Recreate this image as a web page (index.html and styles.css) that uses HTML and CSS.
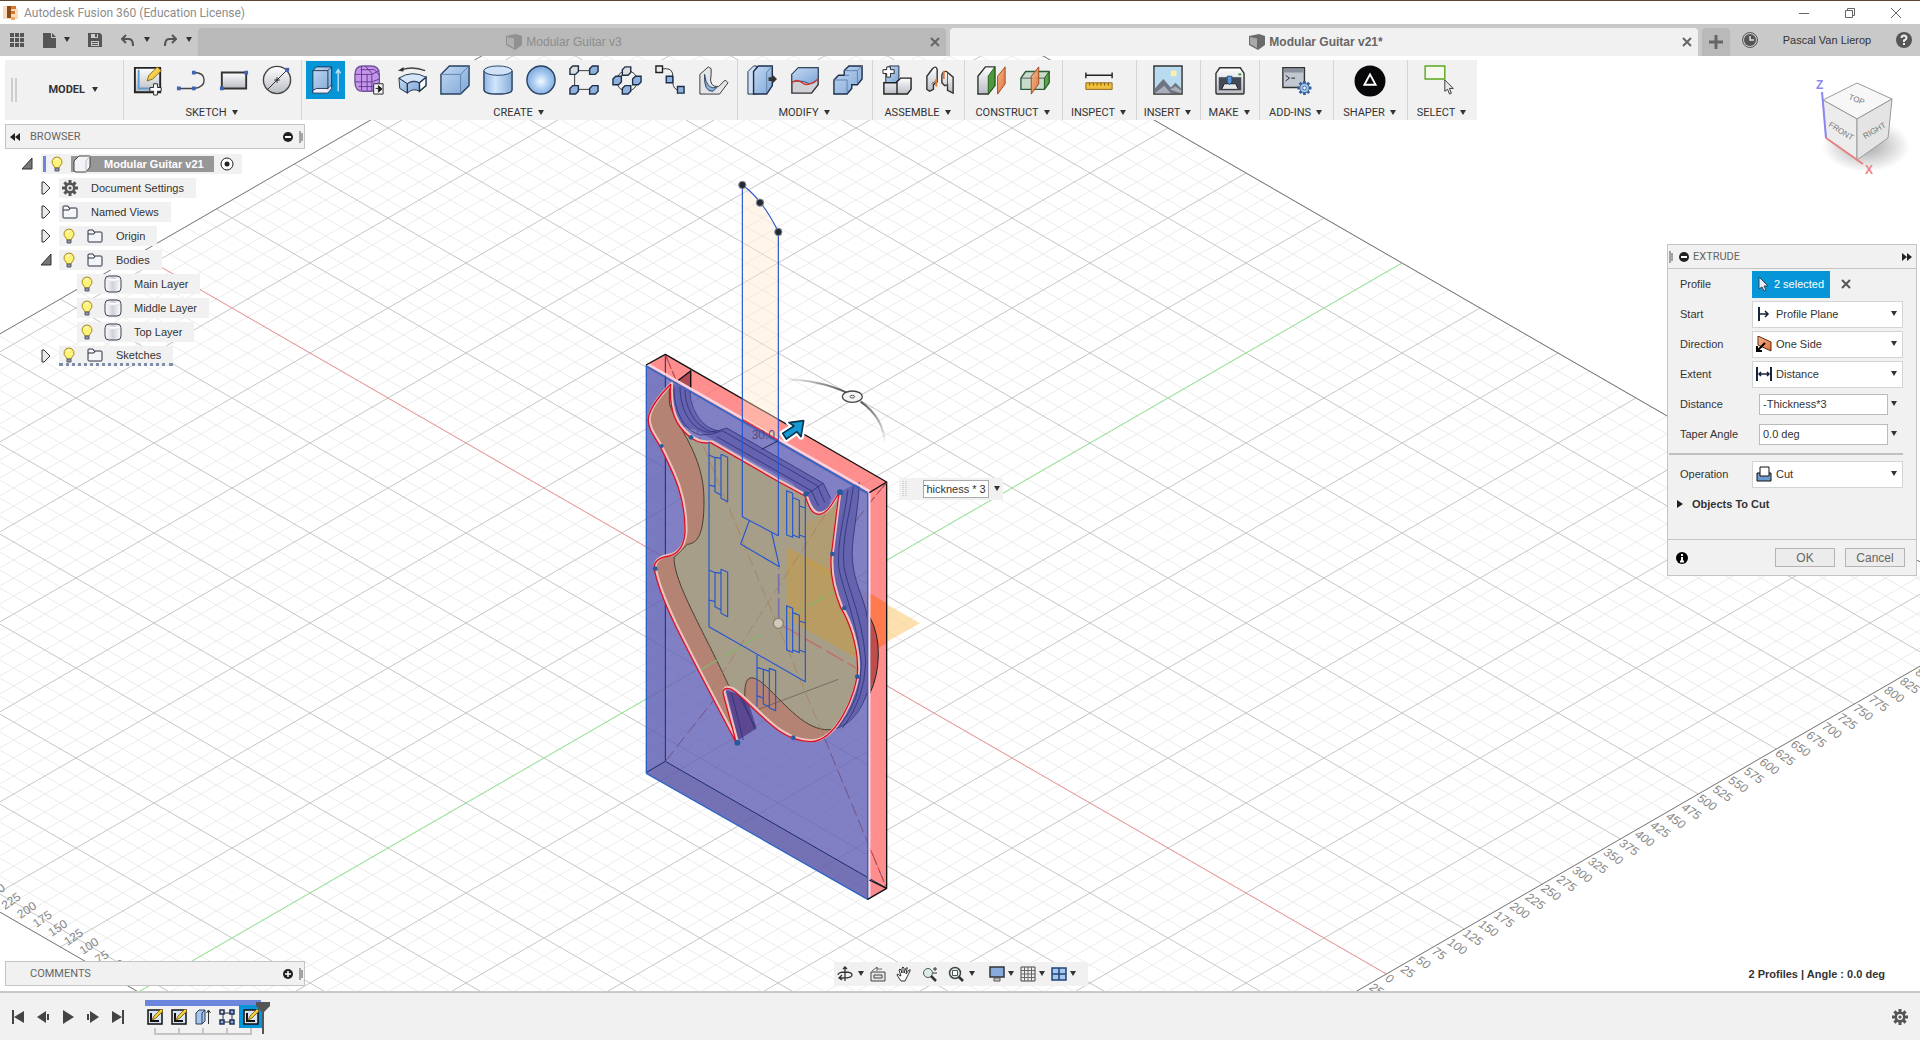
FILE: index.html
```html
<!DOCTYPE html>
<html lang="en">
<head>
<meta charset="utf-8">
<title>Autodesk Fusion 360 (Education License)</title>
<link rel="stylesheet" href="styles.css">
</head>
<body>
<svg class="defs" width="0" height="0" aria-hidden="true">
  <defs>
    <linearGradient id="gBlue" x1="0" y1="0" x2="1" y2="1"><stop offset="0" stop-color="#c3daf4"/><stop offset="1" stop-color="#7fa6d6"/></linearGradient>
    <linearGradient id="gCyl"><stop offset="0" stop-color="#8fb6e4"/><stop offset=".4" stop-color="#d3e6fb"/><stop offset="1" stop-color="#86add9"/></linearGradient>
    <linearGradient id="gGrey" x1="0" y1="0" x2="0" y2="1"><stop offset="0" stop-color="#ffffff"/><stop offset="1" stop-color="#b9bcc4"/></linearGradient>
    <linearGradient id="gBox" x1="0" y1="0" x2="1" y2="0"><stop offset="0" stop-color="#ffffff"/><stop offset=".5" stop-color="#cfd2d8"/><stop offset="1" stop-color="#ffffff"/></linearGradient>
    <linearGradient id="gOrange" x1="0" y1="0" x2="1" y2="1"><stop offset="0" stop-color="#f7b78d"/><stop offset="1" stop-color="#e0713a"/></linearGradient>
    <linearGradient id="gArcL" gradientUnits="userSpaceOnUse" x1="490" y1="627" x2="680" y2="668"><stop offset="0" stop-color="#555" stop-opacity="0"/><stop offset="1" stop-color="#555"/></linearGradient>
    <linearGradient id="gArcR" gradientUnits="userSpaceOnUse" x1="722" y1="695" x2="794" y2="820"><stop offset="0" stop-color="#555"/><stop offset="1" stop-color="#555" stop-opacity="0"/></linearGradient>
    <radialGradient id="gBall" cx=".5" cy=".55" r=".55"><stop offset="0" stop-color="#f2f9ff"/><stop offset=".55" stop-color="#a5c9f0"/><stop offset="1" stop-color="#7ba7dc"/></radialGradient>
    <radialGradient id="gShadow"><stop offset="0" stop-color="#000" stop-opacity=".35"/><stop offset="1" stop-color="#000" stop-opacity="0"/></radialGradient>
    <symbol id="down" viewBox="0 0 8 6"><path d="M1 0h6L4 5z" fill="#333"/></symbol>
    <symbol id="bulb" viewBox="0 0 14 18"><path d="M7 2a5 5 0 0 0-3 9l1 2h4l1-2a5 5 0 0 0-3-9z" fill="#fdf27a" stroke="#a98a1e"/><path d="M5.500 5.500a2 2 0 0 1 2-1.500" stroke="#fff" stroke-width="1.500" fill="none"/><path d="M5 13h4v3H5z" fill="#8f97a5" stroke="#555c68"/></symbol>
    <symbol id="folder" viewBox="0 0 16 14"><path d="M1 3V2q0-1 1-1h4l1 2h7q1 0 1 1v8q0 1-1 1H2q-1 0-1-1z" fill="#f4f5f8" stroke="#2b3040"/><path d="M1 5h6l1-2" fill="none" stroke="#2b3040"/></symbol>
    <symbol id="body" viewBox="0 0 18 18"><path d="M1 5q0-4 4-4h8q4 0 4 4v8q0 4-4 4H5q-4 0-4-4z" fill="url(#gBox)" stroke="#3c4252"/><path d="M2 4q0 2 3 2h8q3 0 3-2" stroke="#dfe2e8" fill="#fff"/></symbol>
    <symbol id="shut" viewBox="0 0 12 14"><path d="M2 1h2l6 6-6 6H2z" fill="#e8e8e8" stroke="#333"/></symbol>
    <symbol id="open" viewBox="0 0 12 14"><path d="M11 1v11H1z" fill="#777" stroke="#333"/></symbol>
    <symbol id="gear" viewBox="0 0 16 16"><g stroke="#555" stroke-width="3"><path d="M8 0v16M0 8h16M2.400 2.400l11.200 11.200M13.600 2.400L2.400 13.600"/></g><circle cx="8" cy="8" r="5.500" fill="#555"/><circle cx="8" cy="8" r="3" fill="#f1f1f1"/><circle cx="8" cy="8" r="1.600" fill="#555"/></symbol>
    <symbol id="sketch" viewBox="0 0 16 16"><path d="M1 1h14v14H1z" fill="#d7e4f5" stroke="#111" stroke-width="1.500"/><path d="M4 4v8h8" fill="none" stroke="#111" stroke-width="2"/><path d="M5 11l2-4 7-7 2 2-7 7z" fill="#f4cf3f" stroke="#8a6a12"/></symbol>
    <symbol id="cube" viewBox="0 0 16 16"><path d="M0 2l10-2 6 2v9l-7 5-9-5z" fill="#6b6b6b"/><path d="M1 3l7 1.500V14L1 10z" fill="#a9a9a9"/></symbol>
    <symbol id="grip" viewBox="0 0 4 12"><path d="M1 0v12M3 2v8" stroke="#555"/></symbol>
  </defs>
</svg>

<header class="titlebar">
  <svg width="16" height="16" viewBox="0 0 16 16"><path d="M0 1h12l3 4v9H0z" fill="#f8dcbc"/><path d="M4 1h9v3H8v2h4v3H8v4H4z" fill="#d9762a"/><path d="M4 1h4v12H4z" fill="#8c4a1a"/><path d="M8 12h4v3H8z" fill="#f0a867"/></svg>
  <h1 class="title">Autodesk Fusion 360 (Education License)</h1>
  <div class="winctl">
    <button aria-label="Minimize"><svg width="12" height="12"><path d="M1 6.500h10" stroke="#666"/></svg></button>
    <button aria-label="Restore"><svg width="12" height="12"><path d="M1.500 3.500h7v7h-7zM3.500 3V1.500h7v7H9" fill="none" stroke="#666"/></svg></button>
    <button aria-label="Close"><svg width="12" height="12"><path d="M1 1l10 10M11 1L1 11" stroke="#666"/></svg></button>
  </div>
</header>

<nav class="tabbar">
  <div class="quick">
    <button class="q1" aria-label="Data panel"><svg width="14" height="14"><path d="M0 0h4v4H0zM5 0h4v4H5zM10 0h4v4h-4zM0 5h4v4H0zM5 5h4v4H5zM10 5h4v4h-4zM0 10h4v4H0zM5 10h4v4H5zM10 10h4v4h-4z" fill="#555"/></svg></button>
    <button class="q2" aria-label="File"><svg width="13" height="15"><path d="M0 0h8v5h5v10H0zM9 0l4 4H9z" fill="#555"/></svg><svg width="8" height="6"><use href="#down"/></svg></button>
    <button class="q3" aria-label="Save"><svg width="14" height="14"><path d="M0 0h12l2 2v12H0z" fill="#555"/><path d="M3 1h7v4H3zM3 8h8v5H3z" fill="#ccc"/><path d="M7 1h2v3H7zM4 9h6v1H4zM4 11h6v1H4z" fill="#555"/></svg></button>
    <button class="q4" aria-label="Undo"><svg width="14" height="13"><path d="M5 1L1 5l4 4M1 5h7q4 0 4 7" fill="none" stroke="#555" stroke-width="2"/></svg><svg width="8" height="6"><use href="#down"/></svg></button>
    <button class="q4" aria-label="Redo"><svg width="14" height="13"><path d="M9 1l4 4-4 4M13 5H6q-4 0-4 7" fill="none" stroke="#555" stroke-width="2"/></svg><svg width="8" height="6"><use href="#down"/></svg></button>
  </div>
  <div class="tab dim"><span class="tabname"><svg width="16" height="16"><use href="#cube"/></svg>Modular Guitar v3</span><button aria-label="Close tab"><svg width="10" height="10"><path d="M1 1l8 8M9 1L1 9" stroke="#666" stroke-width="2"/></svg></button></div>
  <div class="tab active"><span class="tabname"><svg width="16" height="16"><use href="#cube"/></svg>Modular Guitar v21*</span><button aria-label="Close tab"><svg width="10" height="10"><path d="M1 1l8 8M9 1L1 9" stroke="#666" stroke-width="2"/></svg></button></div>
  <button class="newtab" aria-label="New tab"><svg width="14" height="14"><path d="M7 0v14M0 7h14" stroke="#666" stroke-width="3"/></svg></button>
  <div class="account">
    <button aria-label="Job status"><svg width="16" height="16"><circle cx="8" cy="8" r="7.500" fill="none" stroke="#555"/><circle cx="8" cy="8" r="6" fill="#555"/><path d="M8 4v4h4" stroke="#ddd" fill="none" stroke-width="1.500"/></svg></button>
    <button class="user">Pascal Van Lierop</button>
    <button aria-label="Help"><svg width="16" height="16"><circle cx="8" cy="8" r="8" fill="#555"/><path d="M5.500 6q0-2.500 2.500-2.500T10.500 6Q10.500 7.500 8 8.500V10M8 11v2" stroke="#eee" stroke-width="2" fill="none"/></svg></button>
  </div>
</nav>

<main class="stage">
  <svg class="canvas" viewBox="0 56 1920 935" preserveAspectRatio="xMidYMid slice">
    <g id="grid"></g>
    <g id="rulers" class="rulers"></g>
    <g transform="translate(620 170) scale(.33333)" stroke-linejoin="round">
      <path d="M690 1240L900 1360 690 1478z" fill="#fbd48c" fill-opacity=".7"/>
      <!-- stock: front, top and right faces -->
      <path d="M78 585l58-32 664 383v1219l-57 33V968z" fill="#ff7070" fill-opacity=".78"/>
      <path d="M78 585l670 383-5 1220L78 1808z" fill="#6260b5" fill-opacity=".8"/>
      <path d="M78 1808l58-34 664 381-57 33z" fill="#625a9e" fill-opacity=".4"/>
      <path d="M78 585l58 32v1157l-58 34z" fill="#5a55ad" fill-opacity=".15"/>
      <path d="M748 968l52-32v1219l-57 33z" fill="#ff8f8f" fill-opacity=".85"/>
      <path d="M750 1270l50 30v120l-50 28z" fill="#ff7a4e"/>
      <path d="M750 1342q26 50 25 113t-25 115z" fill="#c04c4c" stroke="#222" stroke-width="3"/>
      <path d="M136 553v1221l664 381M136 1774l-58 34M212 602v55l-36-25z" fill="none" stroke="#1b2c6c" stroke-width="3"/>
      <path d="M136 1774L800 936M136 553l664 1602" stroke="#6d4a75" stroke-width="2.500" stroke-dasharray="40 14" fill="none"/>
      <path d="M173 632l38-28v52z" fill="#b04a55"/><path d="M173 632l39-29v54" stroke="#111" stroke-width="4" fill="none"/>
      <!-- pocket walls -->
      <path d="M155 640l55 22c-5 60 40 115 85 120l25-8 290 166 22 45-5 30-30 15-80-90-290-160-80-20z" fill="#6562b0"/>
      <path d="M660 965l58-28c-3 100-28 180-20 240 8 90 46 110 46 190v200c-30 70-70 110-110 112l-20-300z" fill="#6562ae"/>
      <path d="M318 1560l62 20 30 95-55 35z" fill="#5c4791"/>
      <g fill="none" stroke="#2c3478" stroke-width="2.500">
        <path d="M162 655c0 75 35 130 80 140l35-3 30-10 285 165 22 50M180 650c0 70 35 130 85 137l30-5M195 660c0 60 40 125 95 127M210 662c0 60 40 115 85 120l25-8 290 166 22 45M290 800l285 163 20 45M275 812l280 160M610 940l-45 30"/>
        <path d="M718 937c-3 100-28 180-20 240 8 80 44 120 46 190M700 950c-12 90-36 160-28 240 9 60 60 160 65 290q-4 110-70 195M684 960c-12 90-32 150-28 230 9 60 55 160 68 290q0 110-66 188M744 1560q-30 100-104 118"/>
        <path d="M335 1570l35 140M355 1572l50 100M365 1578l40 100"/>
      </g>
      <!-- pocket floor -->
      <clipPath id="pocket"><path id="outline" d="M155 640C130 665 92 710 88 742C85 775 110 800 125 830C165 910 200 980 198 1085C195 1120 180 1148 150 1155C118 1160 103 1172 106 1195C125 1290 180 1390 352 1716L313 1570C308 1548 330 1548 348 1562C430 1630 480 1710 575 1712C650 1712 715 1570 716 1490C715 1420 690 1350 665 1310C640 1250 632 1200 637 1150L660 965C645 990 625 1030 600 1030C575 1028 570 1005 558 975L475 930L275 815C255 818 230 812 213 798C170 765 150 720 155 640z"/></clipPath>
      <use href="#outline" fill="#b58374"/>
      <g clip-path="url(#pocket)">
        <path d="M148 640v60c20 70 104 150 104 290 0 80-10 130-50 133l-40 40c0 77 88 217 163 382l50 45c-5-80 20-85 75-30 60 60 120 130 190 118l140-80V880z" fill="#a79e8a" stroke="#46402f" stroke-width="3"/>
        <path d="M500 1130l150 80 80 260-30-10-200-115z" fill="#d09a30" fill-opacity=".45"/>
        <path d="M557 1060l110-60-20 230-90-50z" fill="#d09a30" fill-opacity=".25"/>
        <path d="M136 1774L660 965M136 553l664 1602" stroke="#a88258" stroke-width="2.500" stroke-dasharray="36 14"/>
        <path d="M245 1498l180-105M500 1345l145-82" stroke="#86b36d" stroke-width="4" stroke-dasharray="60 14"/>
        <path d="M490 1368l230 133" stroke="#c56a62" stroke-width="4" stroke-dasharray="60 14"/>
        <path d="M415 1618l240-90" stroke="#5c564a" stroke-width="2"/>
        <path d="M476 1345v-150" stroke="#7770a8" stroke-width="5" stroke-dasharray="60 14"/>
      </g>
      <use href="#outline" fill="none" stroke="#eec4bd" stroke-width="9"/>
      <use href="#outline" fill="none" stroke="#d81028" stroke-width="4" transform="translate(-3 3)"/>
      <!-- stock edges -->
      <path d="M84 583l664 380v1222" fill="none" stroke="#f8d6df" stroke-width="7"/>
      <path d="M78 588l665 382v1218L79 1810V585" fill="none" stroke="#2b63c4" stroke-width="4"/>
      <path d="M367 748l108 62" stroke="#d81028" stroke-width="5"/>
      <path d="M78 585l58-32 664 383v1219l-57 33M748 968l52-32M748 2130l52 25" fill="none" stroke="#111" stroke-width="4"/>
      <path d="M136 555l30 70M800 940l-45 50M752 2040l46 110" stroke="#d33b30" stroke-width="3" stroke-dasharray="18 10"/>
      <!-- sketch profile and neck -->
      <path d="M367 45q55 40 108 140v625l-108-62z" fill="#ffe6c8" fill-opacity=".4"/>
      <g fill="none" stroke="#2456d0" stroke-width="3.500">
        <path d="M367 45v995l108 57V185Q425 85 367 45M388 1052l-26 70 116 68-23-103M267 815v555l289 165V985"/>
        <path id="clipA" d="M267 855l18 8v102l18 10V865l-18-3M303 985V853l20 9v133zM267 945l18 5"/>
        <use href="#clipA" y="345"/>
        <path id="clipB" d="M500 962l18 8v132l-18-7zM519 983l19 8v112l-19-8M538 1008l18 6M538 1095l18 7"/>
        <use href="#clipB" y="345"/>
        <path d="M411 1455v155M411 1492l19 6v104l18 8v-106l-18-6M448 1495l19 7v120l-19-8zM411 1577l19 8"/>
      </g>
      <g fill="#222a35" stroke="#8b8f96" stroke-width="3"><circle cx="367" cy="45" r="11"/><circle cx="420" cy="98" r="11"/><circle cx="475" cy="186" r="11"/></g>
      <g fill="#2a5a9c"><circle cx="125" cy="828" r="6"/><circle cx="106" cy="1196" r="7"/><circle cx="352" cy="1718" r="9"/><circle cx="520" cy="1703" r="7"/><circle cx="712" cy="1520" r="7"/><circle cx="673" cy="1314" r="7"/><circle cx="637" cy="1152" r="7"/><circle cx="660" cy="967" r="9"/><circle cx="558" cy="972" r="8"/><circle cx="213" cy="802" r="7"/></g>
      <circle cx="475" cy="1360" r="15" fill="#d2c9ba" stroke="#8a7f6e" stroke-width="4"/>
      <text class="dim30" x="395" y="808">30.0</text>
      <path d="M425 838l50-26" stroke="#26215e" stroke-width="3"/>
      <!-- manipulators -->
      <path d="M490 627Q600 630 680 668" fill="none" stroke="url(#gArcL)" stroke-width="6"/>
      <path d="M722 695q70 50 72 125" fill="none" stroke="url(#gArcR)" stroke-width="6"/>
      <ellipse cx="697" cy="680" rx="30" ry="17" fill="#f4f4f4" stroke="#444" stroke-width="4"/><ellipse cx="697" cy="680" rx="7" ry="4" fill="none" stroke="#555" stroke-width="3"/>
      <path d="M488 790l34-22-15-10 44-6-8 48-12-15-32 22z" fill="#159ad6" stroke="#fff" stroke-width="18"/>
      <path d="M488 790l34-22-15-10 44-6-8 48-12-15-32 22z" fill="#159ad6" stroke="#0a3550" stroke-width="5"/>
    </g>
  </svg>

  <div class="viewcube">
    <svg width="100" height="110" viewBox="0 0 100 110">
      <ellipse cx="54" cy="68" rx="44" ry="26" fill="url(#gShadow)"/>
      <path d="M11 22L45 5l35 16-35 20z" fill="#f7f7f7" stroke="#999"/><path d="M11 22l34 19v41L14 60z" fill="#ececec" stroke="#999"/><path d="M80 21L45 41v41l31-22z" fill="#e4e4e4" stroke="#999"/>
      <path d="M10 14l4 46" stroke="#8b86f0" stroke-width="2"/><path d="M14 60l37 26" stroke="#e98080" stroke-width="2"/>
      <text x="4" y="11" class="axis z">Z</text><text x="53" y="96" class="axis x">X</text>
      <text x="36" y="21" class="face" transform="rotate(22 36 21)">TOP</text><text x="16" y="48" class="face" transform="rotate(32 16 48)">FRONT</text><text x="53" y="61" class="face" transform="rotate(-30 53 61)">RIGHT</text>
    </svg>
  </div>

  <div class="valuebox">
    <label class="sr" for="val">Distance value</label>
    <svg width="8" height="18"><path d="M2 1v16M5 1v16" stroke="#bbb" stroke-dasharray="1 1"/></svg>
    <input id="val" type="text" value="-Thickness * 3">
    <button aria-label="Value options"><svg width="8" height="6"><use href="#down"/></svg></button>
  </div>

  <div class="toolbar">
    <div class="group space"><svg width="6" height="24"><path d="M1 0v24M5 0v24" stroke="#aaa"/></svg><button class="model">MODEL<svg width="8" height="6"><use href="#down"/></svg></button></div>
    <div class="group">
      <div class="icons">
        <button aria-label="Create sketch"><svg viewBox="0 0 32 32"><path d="M2 3h27v26H2z" fill="url(#gGrey)" stroke="#222" stroke-width="2"/><path d="M6 5v20h12" stroke="#5e9ccc" fill="none" stroke-width="2"/><path d="M15 17l2-6 9-9 4 4-9 9z" fill="#f5d04a" stroke="#8a6518"/><path d="M22 20h4v4h4v4h-4v4h-4v-4h-4v-4h4z" fill="#fff" stroke="#222"/></svg></button>
        <button aria-label="Line"><svg viewBox="0 0 32 32"><path d="M3 25h16q11-1 11-9T19 8" stroke="#444" fill="none" stroke-width="1.500"/><path d="M1 23h4v4H1zM17 23h4v4h-4zM17 6h4v4h-4z" fill="#3f63b8"/></svg></button>
        <button aria-label="Rectangle"><svg viewBox="0 0 32 32"><path d="M3 8h26v17H3z" fill="url(#gGrey)" stroke="#333" stroke-width="2"/><path d="M1 23h4v4H1zM27 6h4v4h-4z" fill="#3f63b8"/></svg></button>
        <button aria-label="Circle"><svg viewBox="0 0 32 32"><circle cx="16" cy="16" r="14.500" fill="url(#gGrey)" stroke="#444" stroke-width="1.500"/><path d="M6 26L27 5M13 16h6M16 13v6" stroke="#222"/><path d="M25 3h4v4h-4z" fill="#3f63b8"/></svg></button>
      </div>
      <button class="caption">SKETCH<svg width="8" height="6"><use href="#down"/></svg></button>
    </div>
    <div class="group">
      <div class="icons">
        <button class="on" aria-label="Extrude"><svg viewBox="0 0 32 32"><path d="M2 6l4-4h16v21l-4 6H2z" fill="url(#gBlue)" stroke="#21334d"/><path d="M2 27l4-2h12l4-4v4l-4 5H2z" fill="#eef" stroke="#21334d"/><path d="M18 6v20M18 6l4-4M2 6h16" stroke="#21334d" fill="none"/><path d="M29 28V6M26.500 9L29 5l2.500 4" stroke="#bfe0f5" fill="none" stroke-width="1.500"/></svg></button>
        <button aria-label="Form"><svg viewBox="0 0 32 32"><path d="M1 10q0-9 9-9h8q9 0 9 9v8q0 10-9 10h-8q-9 0-9-10z" fill="#c595ee" stroke="#75539b" stroke-width="1.500"/><path d="M1 10h18l8-4M1 18h18l8-3M8 1v26M14 10v17M19 10v18M7 5h15l5 6M12 1l8 9M5 23h15" stroke="#5f3c88" fill="none"/><path d="M21 20h10v11H21z" fill="#f4f4f4" stroke="#222"/><path d="M23 25h6M26 22l4 3.500-4 3.500z" fill="#222" stroke="#222"/></svg></button>
        <button aria-label="Revolve"><svg viewBox="0 0 32 32"><path d="M2 14q14-9 29-1l-7 6q-7-4-13 1z" fill="#d5e6fa" stroke="#1e2f48"/><path d="M2 14l9 6v10l-8-5zM11 20q6-4 13-1v9q-7-4-13 2z" fill="url(#gBlue)" stroke="#1e2f48"/><path d="M31 13v9l-7 6v-9z" fill="#fff" stroke="#1e2f48" stroke-width="1.500"/><path d="M5 5q12-4 25 1" stroke="#444" fill="none" stroke-width="1.500"/><path d="M1 6l6-4v5z" fill="#333"/></svg></button>
        <button aria-label="Box"><svg viewBox="0 0 32 32"><path d="M1 10l9-9h21v21l-9 9H1z" fill="url(#gBlue)" stroke="#27405f" stroke-width="1.500"/><path d="M1 10h21v21M22 10l9-9" stroke="#5d7fa8" fill="none"/></svg></button>
        <button aria-label="Cylinder"><svg viewBox="0 0 32 32"><path d="M1 6v20q0 5 15 5t15-5V6" fill="url(#gCyl)" stroke="#27405f" stroke-width="1.500"/><ellipse cx="16" cy="6" rx="15" ry="5" fill="#cfe2f8" stroke="#27405f"/></svg></button>
        <button aria-label="Sphere"><svg viewBox="0 0 32 32"><circle cx="16" cy="16" r="15" fill="url(#gBall)" stroke="#27405f" stroke-width="1.500"/></svg></button>
        <button aria-label="Rectangular pattern"><svg viewBox="0 0 32 32"><path d="M6 6v20M6 6h20M6 26h20" stroke="#333"/><g fill="#8fb2de" stroke="#1e2f48" stroke-width="1.500"><path d="M22 4l3-3h6v6l-3 3h-6zM1 25l3-3h6v6l-3 3H1zM22 25l3-3h6v6l-3 3h-6z"/><path d="M1 4l3-3h6v6l-3 3H1z" fill="#ddd"/></g></svg></button>
        <button aria-label="Circular pattern"><svg viewBox="0 0 32 32"><circle cx="16" cy="17" r="11" fill="none" stroke="#333"/><g fill="#8fb2de" stroke="#1e2f48" stroke-width="1.500"><path d="M1 15l3-3h6v6l-3 3H1zM22 15l3-3h6v6l-3 3h-6zM11 25l3-3h6v6l-3 3h-6z"/><path d="M11 5l3-3h6v6l-3 3h-6z" fill="#ddd"/></g></svg></button>
        <button aria-label="Path pattern"><svg viewBox="0 0 32 32"><path d="M8 4h4q7 0 7 8v6q0 9 8 9" fill="none" stroke="#333"/><path d="M1 1h7v7H1z" fill="#eee" stroke="#222" stroke-width="1.500"/><path d="M12 12h7v7h-7zM24 23h7v7h-7z" fill="#8fb2de" stroke="#1e2f48" stroke-width="1.500"/></svg></button>
        <button aria-label="Rib"><svg viewBox="0 0 32 32"><path d="M2 10l9-8 3 2v6q-3 14 8 13l7-7 3 3-9 12H2z" fill="#e4e5e9" stroke="#333"/><path d="M7 10q2 17 13 14l-4 4q-10 1-9-18z" fill="#8fb2de" stroke="#27405f"/></svg></button>
      </div>
      <button class="caption">CREATE<svg width="8" height="6"><use href="#down"/></svg></button>
    </div>
    <div class="group">
      <div class="icons">
        <button aria-label="Press pull"><svg viewBox="0 0 32 32"><path d="M1 7l6-6h3v30H1z" fill="#cfe0f4" stroke="#1e2f48"/><path d="M7 7l5-6h15v21l-6 9H7z" fill="url(#gBlue)" stroke="#1e2f48" stroke-width="1.500"/><path d="M21 8v22M21 8l6-7" stroke="#5d7fa8"/><path d="M23 13h4v-3l5 5-5 5v-3h-4z" fill="#333"/></svg></button>
        <button aria-label="Fillet"><svg viewBox="0 0 32 32"><path d="M2 10l7-7h21v18l-7 9H2z" fill="#cfd1d6" stroke="#333" stroke-width="1.500"/><path d="M2 18v-8l7-7h21v12q-6 7-12 4t-16-1z" fill="url(#gBlue)" stroke="#27405f"/><path d="M2 19q5-5 11 0t17-4" stroke="#d8322c" fill="none" stroke-width="1.500"/></svg></button>
        <button aria-label="Combine"><svg viewBox="0 0 32 32"><path d="M1 16l5-5h6V6l5-5h14v14l-5 6h-6v4l-5 6H1z" fill="url(#gBlue)" stroke="#1e2f48" stroke-width="1.500"/><path d="M12 6h14v14M26 6l5-5M1 16h14v14M12 11h5" stroke="#5d7fa8" fill="none"/></svg></button>
      </div>
      <button class="caption">MODIFY<svg width="8" height="6"><use href="#down"/></svg></button>
    </div>
    <div class="group">
      <div class="icons">
        <button aria-label="New component"><svg viewBox="0 0 32 32"><path d="M4 5l4-4h10v14l-4 4H4z" fill="url(#gBlue)" stroke="#1e2f48"/><path d="M2 19h14v12H2zM16 18l4-4h11v12l-4 5H16z" fill="url(#gGrey)" stroke="#222" stroke-width="1.500"/><path d="M5 2h4v3h4v4H9v4H5V9H1V5h4z" fill="#fff" stroke="#222"/></svg></button>
        <button aria-label="Joint"><svg viewBox="0 0 32 32"><path d="M2 12l6-8q4-4 5 1v13l-4 3v5l-4 2-3-2z" fill="url(#gGrey)" stroke="#333" stroke-width="1.500"/><path d="M18 11q1-5 5-4l7 6v17l-6-3v-6l-3 1-3-3z" fill="url(#gGrey)" stroke="#333" stroke-width="1.500"/><path d="M7 20l6-4M24 8v14" stroke="#555"/><path d="M12 15v8M20 6v9" stroke="#e8792d" stroke-width="2"/></svg></button>
      </div>
      <button class="caption">ASSEMBLE<svg width="8" height="6"><use href="#down"/></svg></button>
    </div>
    <div class="group wide">
      <div class="icons">
        <button aria-label="Offset plane"><svg viewBox="0 0 32 32"><path d="M1 12L9 2h10v20l-7 9H1z" fill="url(#gGrey)" stroke="#333" stroke-width="1.500"/><path d="M12 12l7-10v20l-7 9z" fill="#4c9a3c" stroke="#245a1a"/><path d="M22 12l8-10v18l-8 11z" fill="url(#gOrange)" stroke="#9b4517"/></svg></button>
        <button aria-label="Midplane"><svg viewBox="0 0 32 32"><path d="M1 14l5-7h25v12l-5 7H1z" fill="#c9dccb" stroke="#2c5b38" stroke-width="1.500"/><path d="M26 14l5-7v12l-5 7z" fill="#58a04a" stroke="#245a1a"/><path d="M1 14h25" stroke="#555"/><path d="M12 12l8-10v18l-8 11z" fill="url(#gOrange)" fill-opacity=".9" stroke="#9b4517"/></svg></button>
      </div>
      <button class="caption">CONSTRUCT<svg width="8" height="6"><use href="#down"/></svg></button>
    </div>
    <div class="group g74">
      <div class="icons"><button aria-label="Measure"><svg viewBox="0 0 32 32"><path d="M2 8v6M30 8v6M2 11h28" stroke="#222" stroke-width="1.500"/><path d="M2 19h28v7H2z" fill="#f0bf3c" stroke="#8a6518"/><path d="M6 19v3M10 19v3M14 19v3M18 19v3M22 19v3M26 19v3" stroke="#7a5510"/></svg></button></div>
      <button class="caption">INSPECT<svg width="8" height="6"><use href="#down"/></svg></button>
    </div>
    <div class="group g64">
      <div class="icons"><button aria-label="Insert image"><svg viewBox="0 0 32 32"><path d="M1 1h30v30H1z" fill="#b9dbf0" stroke="#333" stroke-width="1.500"/><path d="M19 6h6v6h-6z" fill="#fdf0a8"/><path d="M2 25l9-10 8 9 5-5 6 6v5H2z" fill="#6f7683"/><path d="M2 30l10-8 7 8zM18 26l6-3 6 4v3z" fill="#a9afb9"/></svg></button></div>
      <button class="caption">INSERT<svg width="8" height="6"><use href="#down"/></svg></button>
    </div>
    <div class="group g59">
      <div class="icons"><button aria-label="3D print"><svg viewBox="0 0 32 32"><path d="M1 9l4-6h22l4 6v20q0 2-2 2H3q-2 0-2-2z" fill="url(#gGrey)" stroke="#333" stroke-width="1.500"/><path d="M4 13h24v14H4z" fill="#444b57"/><path d="M7 26l3-6h12l3 6z" fill="#e8e8e8" stroke="#222"/><path d="M13 12h5v6l-2.500 3-2.500-3z" fill="#5d9bdc" stroke="#1e4f86"/><path d="M25 9h3v2h-3z" fill="#2d9a37"/></svg></button></div>
      <button class="caption">MAKE<svg width="8" height="6"><use href="#down"/></svg></button>
    </div>
    <div class="group g74">
      <div class="icons"><button aria-label="Scripts and add-ins"><svg viewBox="0 0 32 32"><path d="M2 3h23v21H2z" fill="#c2c8d2" stroke="#333" stroke-width="1.500"/><path d="M3 4h21v4H3z" fill="#8b919c"/><path d="M5 11l4 3-4 3M11 14h4" stroke="#222" fill="none"/><g stroke="#34619c" stroke-width="3"><path d="M25 17v15M17.500 24.500h15M20 19l10 11M30 19L20 30"/></g><circle cx="25" cy="24.500" r="5" fill="#a9c7e8" stroke="#34619c"/><circle cx="25" cy="24.500" r="2" fill="#fff" stroke="#34619c"/></svg></button></div>
      <button class="caption">ADD-INS<svg width="8" height="6"><use href="#down"/></svg></button>
    </div>
    <div class="group g74">
      <div class="icons"><button aria-label="Shaper utilities"><svg viewBox="0 0 32 32"><circle cx="16" cy="17" r="16.500" fill="#08080a"/><path d="M16 10l6 11H10z" fill="none" stroke="#fff" stroke-width="2"/></svg></button></div>
      <button class="caption">SHAPER<svg width="8" height="6"><use href="#down"/></svg></button>
    </div>
    <div class="group g70">
      <div class="icons"><button aria-label="Select"><svg viewBox="0 0 32 32"><path d="M-2 1h21v14H-2z" fill="#f4f8f0" stroke="#5ca61c" stroke-width="1.500"/><path d="M19 16v12l3-2 2 5 2-1-2-5h4z" fill="#e9e9e9" stroke="#333"/></svg></button></div>
      <button class="caption">SELECT<svg width="8" height="6"><use href="#down"/></svg></button>
    </div>
  </div>

  <div class="middle">
    <section class="browser">
      <div class="panelbar top"><svg width="10" height="8"><path d="M5 0v8L0 4zM10 0v8L5 4z" fill="#222"/></svg><h2>BROWSER</h2><button aria-label="Collapse browser"><svg width="10" height="10"><circle cx="5" cy="5" r="5" fill="#222"/><path d="M2 5h6" stroke="#fff" stroke-width="2"/></svg></button><svg width="4" height="12"><use href="#grip"/></svg></div>
      <ul class="tree">
        <li class="lv0"><svg width="12" height="14"><use href="#open"/></svg><div class="node root"><i></i><svg width="14" height="18"><use href="#bulb"/></svg><b><svg width="18" height="18" viewBox="0 0 18 18"><path d="M1 6l5-5h11v11l-4 5H3q-2 0-2-2z" fill="#f3f4f7" stroke="#444"/><path d="M13 6l4-5M13 6v11" stroke="#bbb"/></svg>Modular Guitar v21</b><svg width="14" height="14"><circle cx="7" cy="7" r="6" fill="#fff" stroke="#222"/><circle cx="7" cy="7" r="2.500" fill="#222"/></svg></div></li>
        <li class="lv1"><svg width="12" height="14"><use href="#shut"/></svg><div class="node"><svg class="w16" width="16" height="16"><use href="#gear"/></svg><span>Document Settings</span></div></li>
        <li class="lv1"><svg width="12" height="14"><use href="#shut"/></svg><div class="node"><svg class="w16" width="16" height="14"><use href="#folder"/></svg><span>Named Views</span></div></li>
        <li class="lv1"><svg width="12" height="14"><use href="#shut"/></svg><div class="node"><svg class="w14" width="14" height="18"><use href="#bulb"/></svg><svg class="w16" width="16" height="14"><use href="#folder"/></svg><span>Origin</span></div></li>
        <li class="lv1"><svg width="12" height="14"><use href="#open"/></svg><div class="node"><svg class="w14" width="14" height="18"><use href="#bulb"/></svg><svg class="w16" width="16" height="14"><use href="#folder"/></svg><span>Bodies</span></div></li>
        <li class="lv2"><div class="node"><svg class="w14" width="14" height="18"><use href="#bulb"/></svg><svg width="18" height="18"><use href="#body"/></svg><span>Main Layer</span></div></li>
        <li class="lv2"><div class="node"><svg class="w14" width="14" height="18"><use href="#bulb"/></svg><svg width="18" height="18"><use href="#body"/></svg><span>Middle Layer</span></div></li>
        <li class="lv2"><div class="node"><svg class="w14" width="14" height="18"><use href="#bulb"/></svg><svg width="18" height="18"><use href="#body"/></svg><span>Top Layer</span></div></li>
        <li class="lv1"><svg width="12" height="14"><use href="#shut"/></svg><div class="node hatch"><svg class="w14" width="14" height="18"><use href="#bulb"/></svg><svg class="w16" width="16" height="14"><use href="#folder"/></svg><span>Sketches</span></div></li>
      </ul>
    </section>

    <form class="dialog">
      <div class="dhead"><svg width="4" height="12"><use href="#grip"/></svg><svg width="10" height="10"><circle cx="5" cy="5" r="5" fill="#222"/><path d="M2 5h6" stroke="#fff" stroke-width="2"/></svg><h2>EXTRUDE</h2><svg width="10" height="8"><path d="M0 0v8l5-4zM5 0v8l5-4z" fill="#222"/></svg></div>
      <div class="row"><span class="lab">Profile</span><button type="button" class="picked"><svg width="12" height="16"><path d="M1 1v12l3-2 2 4 2-1-2-4h4z" fill="#e8eef2" stroke="#345"/></svg>2 selected</button><button type="button" class="clear" aria-label="Clear selection"><svg width="10" height="10"><path d="M1 1l8 8M9 1L1 9" stroke="#555" stroke-width="2"/></svg></button></div>
      <div class="row"><label class="lab" for="start">Start</label><div class="pick"><svg width="16" height="16"><path d="M3 1v14" stroke="#16243c" stroke-width="2"/><path d="M4 8h8M9 5l3 3-3 3" stroke="#16243c" fill="none" stroke-width="1.500"/></svg><select id="start"><option>Profile Plane</option></select><svg width="8" height="6"><use href="#down"/></svg></div></div>
      <div class="row"><label class="lab" for="dir">Direction</label><div class="pick"><svg width="16" height="16"><path d="M2 0l13 6v9L2 9z" fill="url(#gOrange)" stroke="#5a2a10"/><path d="M1 15l8-8M1 10v5h5" stroke="#000" fill="none" stroke-width="2"/></svg><select id="dir"><option>One Side</option></select><svg width="8" height="6"><use href="#down"/></svg></div></div>
      <div class="row"><label class="lab" for="ext">Extent</label><div class="pick"><svg width="16" height="16"><path d="M1 1v14M15 1v14" stroke="#16243c" stroke-width="2"/><path d="M3 8h10M5 6L3 8l2 2M11 6l2 2-2 2" stroke="#16243c" fill="none" stroke-width="1.500"/></svg><select id="ext"><option>Distance</option></select><svg width="8" height="6"><use href="#down"/></svg></div></div>
      <div class="row"><label class="lab" for="dist">Distance</label><div class="entry"><input id="dist" type="text" value="-Thickness*3"><svg width="8" height="6"><use href="#down"/></svg></div></div>
      <div class="row"><label class="lab" for="taper">Taper Angle</label><div class="entry"><input id="taper" type="text" value="0.0 deg"><svg width="8" height="6"><use href="#down"/></svg></div></div>
      <hr>
      <div class="row"><label class="lab" for="op">Operation</label><div class="pick"><svg width="16" height="16"><path d="M1 7h14v8H1z" fill="#6d9bd0" stroke="#111"/><path d="M4 1h9v9H4z" fill="#fff" stroke="#111"/></svg><select id="op"><option>Cut</option></select><svg width="8" height="6"><use href="#down"/></svg></div></div>
      <button type="button" class="objects"><svg width="6" height="10"><path d="M0 1v8l6-4z" fill="#222"/></svg>Objects To Cut</button>
      <div class="dfoot"><svg width="12" height="12"><circle cx="6" cy="6" r="6" fill="#000"/><path d="M6 2v2M6 5v5M4 9.500h4" stroke="#fff" stroke-width="2"/></svg><button type="button">OK</button><button type="button">Cancel</button></div>
    </form>
  </div>

  <div class="bottom">
    <div class="panelbar comments"><h2>COMMENTS</h2><button aria-label="Expand comments"><svg width="10" height="10"><circle cx="5" cy="5" r="5" fill="#222"/><path d="M2 5h6M5 2v6" stroke="#fff" stroke-width="1.500"/></svg></button><svg width="4" height="12"><use href="#grip"/></svg></div>
    <div class="navbar">
      <button aria-label="Orbit"><svg width="16" height="16"><path d="M8 1v14M6 3l2-2 2 2M8 6q7 0 7 3t-9 3H2M5 9l-3 3 3 2M8 6Q1 6 1 9" fill="none" stroke="#333" stroke-width="1.300"/></svg><svg class="arr" width="8" height="6"><use href="#down"/></svg></button>
      <button aria-label="Look at"><svg width="16" height="16"><path d="M1 6h14v9H1zM4 9h8v3H4z" fill="#e6e6e6" stroke="#444"/><path d="M2 5l5-4v2h5M7 1v4" stroke="#666" fill="none"/></svg></button>
      <button aria-label="Pan"><svg width="16" height="16"><path d="M5 15l-4-6q0-2 2 0l2 1-2-6q1-2 2 0l1 3V2q1-2 2 0v5l2-5q2-1 1 1l-1 5 3-4q2-1 1 1l-3 6-2 4z" fill="#fff" stroke="#333"/></svg></button>
      <button aria-label="Zoom"><svg width="16" height="16"><circle cx="6" cy="7" r="4.500" fill="#d8ece8" stroke="#555"/><path d="M9 10l5 5" stroke="#333" stroke-width="2.500"/><path d="M11 3h4M13 1v4M11 7h4" stroke="#333"/></svg></button>
      <button aria-label="Fit"><svg width="16" height="16"><circle cx="7" cy="7" r="5.500" fill="#d8ece8" stroke="#444" stroke-width="1.500"/><path d="M4.500 4.500h5v5h-5z" fill="#fff" stroke="#555"/><path d="M11 11l4 4" stroke="#333" stroke-width="2.500"/></svg><svg class="arr" width="8" height="6"><use href="#down"/></svg></button>
      <button class="sep" aria-label="Display settings"><svg width="16" height="16"><path d="M1 1h14v10H1z" fill="#86abdc" stroke="#333" stroke-width="1.500"/><path d="M5 12h6v3H5z" fill="#ccc" stroke="#555"/></svg><svg class="arr" width="8" height="6"><use href="#down"/></svg></button>
      <button class="near" aria-label="Grid and snaps"><svg width="16" height="16"><path d="M1 1h14v14H1z" fill="#eee" stroke="#444"/><path d="M4.500 1v14M8 1v14M11.500 1v14M1 4.500h14M1 8h14M1 11.500h14" stroke="#666"/></svg><svg class="arr" width="8" height="6"><use href="#down"/></svg></button>
      <button class="near" aria-label="Viewports"><svg width="16" height="14"><path d="M1 1h14v12H1zM8 1v12M1 7h14" fill="#a9c7ec" stroke="#1f4478" stroke-width="1.500"/></svg><svg class="arr" width="8" height="6"><use href="#down"/></svg></button>
    </div>
    <p class="status">2 Profiles | Angle : 0.0 deg</p>
  </div>
</main>

<footer class="timeline">
  <div class="play">
    <button aria-label="To start"><svg width="12" height="14"><path d="M1 0v14" stroke="#444" stroke-width="2"/><path d="M12 1v12L2 7z" fill="#444"/></svg></button>
    <button aria-label="Step back"><svg width="12" height="12"><path d="M9 0v12L0 6z" fill="#444"/><path d="M11 3v6" stroke="#444" stroke-width="2"/></svg></button>
    <button aria-label="Play"><svg width="12" height="14"><path d="M1 0v14l11-7z" fill="#444"/></svg></button>
    <button aria-label="Step forward"><svg width="12" height="12"><path d="M3 0v12l9-6z" fill="#444"/><path d="M1 3v6" stroke="#444" stroke-width="2"/></svg></button>
    <button aria-label="To end"><svg width="12" height="14"><path d="M11 0v14" stroke="#444" stroke-width="2"/><path d="M0 1v12l10-6z" fill="#444"/></svg></button>
  </div>
  <div class="track">
    <div class="steps">
      <button aria-label="Sketch 1"><svg width="16" height="16"><use href="#sketch"/></svg></button>
      <button aria-label="Sketch 2"><svg width="16" height="16"><use href="#sketch"/></svg></button>
      <button aria-label="Extrude 1"><svg width="16" height="16"><path d="M1 4l3-3h6v11l-3 3H1z" fill="#a9c7ec" stroke="#27405f"/><path d="M7 4v11M7 4l3-3" stroke="#27405f"/><path d="M13.500 15V2M11.500 4l2-3 2 3" stroke="#333" fill="none"/></svg></button>
      <button aria-label="Pattern 1"><svg width="16" height="16"><path d="M4 4h9v9H4z" fill="none" stroke="#333"/><g fill="#8fb2de" stroke="#1e2f58" stroke-width="1.500"><path d="M11 1h4v4h-4zM1 11h4v4H1zM11 11h4v4h-4z"/><path d="M1 1h4v4H1z" fill="#ddd"/></g></svg></button>
      <button class="cur" aria-label="Sketch 3"><svg width="16" height="16"><use href="#sketch"/></svg></button>
    </div>
    <svg class="ruler" width="98" height="8"><path d="M1 0v6h96V0M25 0v6M49 0v6M73 0v6" fill="none" stroke="#c4c4c4" stroke-width="2"/></svg>
  </div>
  <svg class="marker" width="14" height="32"><path d="M0 0h14v4L8 10v22H6V10L0 4z" fill="#555"/></svg>
  <button class="prefs" aria-label="Timeline settings"><svg width="16" height="16"><use href="#gear"/></svg></button>
</footer>
<script src="script.js"></script>
</body>
</html>
```
FILE: styles.css
```css
* { box-sizing: border-box; }
body {
  margin: 0;
  min-height: 100vh;
  display: flex;
  flex-direction: column;
  background: #fff;
  color: #333;
  font: 11px/16px "Liberation Sans", Arial, sans-serif;
  overflow: hidden;
}
.defs { position: absolute; }
h1, h2, p, ul { margin: 0; padding: 0; font-weight: normal; }
button, input, select { font: inherit; color: inherit; }
button {
  display: flex;
  align-items: center;
  justify-content: center;
  padding: 0;
  border: 0;
  background: none;
  white-space: nowrap;
}
svg { display: block; flex: none; }
.sr {
  position: absolute;
  width: 1px;
  height: 1px;
  overflow: hidden;
  clip-path: inset(50%);
}

/* title bar */
.titlebar {
  display: flex;
  align-items: center;
  gap: 5px;
  height: 24px;
  padding: 0 11px 0 3px;
  border-top: 1px solid #5a4632;
}
.title { flex: 1; font: 12px/16px Roboto, sans-serif; color: #8c8c8c; }
.winctl { display: flex; gap: 34px; padding-right: 7px; }

/* document tabs */
.tabbar {
  display: flex;
  align-items: stretch;
  gap: 4px;
  height: 32px;
  background: #c9c9c9;
}
.quick { display: flex; align-items: center; width: 194px; padding-left: 10px; }
.quick button { gap: 7px; }
.quick .q2 { margin-left: 19px; }
.quick .q3 { margin-left: 17px; }
.quick .q4 { margin-left: 19px; gap: 8px; }
.quick .q4 + .q4 { margin-left: 12px; }
.tab {
  flex: 1;
  display: flex;
  align-items: center;
  margin-top: 4px;
  padding-right: 6px;
  border-radius: 4px 4px 0 0;
  background: #b9b9b9;
  font-size: 12px;
  color: #8d8d8d;
}
.tabname { flex: 1; display: flex; align-items: center; justify-content: center; gap: 4px; }
.dim .tabname svg { opacity: .5; }
.active { background: #f1f1f1; font-weight: bold; color: #666; }
.newtab { width: 28px; margin-top: 4px; border-radius: 4px 4px 0 0; background: #b9b9b9; }
.account { display: flex; align-items: center; width: 186px; padding: 0 8px; justify-content: space-between; }

/* modelling stage */
.stage {
  position: relative;
  flex: 1;
  display: flex;
  flex-direction: column;
  gap: 4px;
  padding: 4px 3px 5px 5px;
}
.canvas { position: absolute; inset: 0; width: 100%; height: 100%; }
.rulers text { font: 12px "Liberation Sans", Arial, sans-serif; fill: #888; }
.rulers .east { font-style: italic; }
.dim30 { font: 36px "Liberation Sans", Arial, sans-serif; fill: #554a80; }
.viewcube { position: absolute; right: 8px; top: 22px; }
.axis { font: bold 12px "Liberation Sans", Arial, sans-serif; }
.axis.z { fill: #8b86f0; }
.axis.x { fill: #ef8383; }
.face { font: 8px "Liberation Sans", Arial, sans-serif; fill: #777; }
.valuebox {
  position: absolute;
  left: 899px;
  top: 422px;
  display: flex;
  align-items: center;
  width: 104px;
  height: 22px;
  padding: 0 2px;
  background: #f1f1f1;
}
.valuebox input {
  width: 66px;
  height: 18px;
  margin: 0 4px 0 14px;
  padding: 0 2px 0 0;
  border: 1px solid #aaa;
  background: #fff;
}

/* ribbon */
.toolbar {
  position: relative;
  display: flex;
  align-self: flex-start;
  height: 60px;
  background: #f1f1f1;
}
.group {
  display: flex;
  flex-direction: column;
  align-items: center;
  justify-content: space-between;
  padding: 1px 3px 0 2px;
}
.group + .group {
  border-left: 1px solid #d4d4d4;
}
.group.wide { padding: 1px 6px 0 5px; }
.g74 { width: 74px; }
.g70 { width: 70px; }
.g64 { width: 64px; }
.g59 { width: 59px; }
.group.space { flex-direction: row; width: 118px; padding: 0 24px 0 6px; }
.model { gap: 6px; font: bold 11px/16px Roboto, sans-serif; }
.icons { display: flex; }
.icons button { width: 43px; height: 38px; }
.icons svg { width: 30px; height: 30px; overflow: visible; }
.icons .on { width: 39px; margin: 0 2px; background: #0696d7; }
.caption { gap: 4px; height: 16px; margin-bottom: -1px; font: 11px/16px Roboto, sans-serif; }

/* browser */
.middle {
  position: relative;
  flex: 1;
  display: flex;
  justify-content: space-between;
  align-items: flex-start;
}
.browser { width: 300px; }
.panelbar {
  display: flex;
  align-items: center;
  gap: 6px;
  width: 300px;
  height: 25px;
  padding: 0 1px 0 4px;
  border: 1px solid #c4c4c4;
  background: #f1f1f1;
}
.panelbar h2, .dhead h2 { flex: 1; font: 11px/16px Roboto, sans-serif; color: #666; }
.panelbar h2 { margin-left: 4px; }
.panelbar.comments h2 { margin-left: 20px; }
.tree { display: flex; flex-direction: column; gap: 4px; margin-top: 5px; list-style: none; }
.tree li { display: flex; align-items: center; height: 20px; }
.lv0 { gap: 8px; padding-left: 16px; }
.lv1 { gap: 7px; padding-left: 35px; }
.lv2 { padding-left: 72px; }
.node { display: flex; align-items: center; height: 20px; padding: 0 12px 0 2px; background: #f1f1f1; }
.node .w14 { margin: 0 10px 0 1px; }
.node .w16 { margin: 0 1px; }
.node span { margin-left: 12px; }
.hatch { border-bottom: 3px dotted #7f8ea8; }
.root { gap: 7px; padding: 0 8px 0 2px; }
.root i { width: 3px; height: 16px; background: #6b86dc; margin-right: -3px; }
.root b { display: flex; align-items: center; gap: 13px; height: 16px; padding: 0 10px 0 2px; background: #979797; color: #fff; }
.root b + svg { margin-left: -1px; }

/* extrude dialog */
.dialog {
  width: 250px;
  margin-top: 120px;
  border: 1px solid #c4c4c4;
  background: #f1f1f1;
}
.dhead {
  display: flex;
  align-items: center;
  height: 24px;
  padding: 0 4px 0 1px;
  gap: 4px;
  border-bottom: 1px solid #c4c4c4;
}
.dhead svg + svg { margin-left: 2px; }
.row { display: flex; align-items: center; height: 30px; padding: 0 13px 0 12px; }
.lab { flex: none; width: 72px; white-space: nowrap; }
.picked { gap: 4px; width: 78px; height: 27px; background: #0696d7; color: #fff; }
.clear { margin-left: 11px; }
.pick {
  flex: 1;
  display: flex;
  align-items: center;
  height: 27px;
  padding: 0 4px 0 3px;
  border: 1px solid #d4d4d4;
  background: #fff;
}
.pick select { flex: 1; appearance: none; padding: 0 0 0 4px; border: 0; background: none; }
.entry { flex: 1; display: flex; align-items: center; gap: 2px; padding: 0 5px 0 7px; min-width: 0; }
.entry input { flex: 1; min-width: 0; height: 21px; padding: 0 3px; border: 1px solid #bbb; background: #fff; }
.dialog hr { margin: 4px 13px 4px 1px; border: 0; height: 2px; background: #c0c0c0; }
.objects { gap: 9px; height: 30px; margin: 0 0 20px 9px; font-weight: bold; }
.dfoot { display: flex; align-items: center; gap: 10px; height: 36px; padding: 0 11px 0 8px; border-top: 1px solid #c4c4c4; }
.dfoot svg { margin-right: auto; }
.dfoot button { width: 60px; height: 19px; border: 1px solid #b4b4b4; font-size: 12px; color: #666; background: #ececec; }

/* bottom strip */
.bottom {
  position: relative;
  display: grid;
  grid-template-columns: 1fr auto 1fr;
  align-items: center;
}
.navbar { display: flex; align-items: center; gap: 10px; height: 24px; padding: 0 16px 0 3px; background: #f1f1f1; }
.navbar .arr { margin: 0 -5px 0 4px; }
.navbar .sep { margin-left: 8px; }
.navbar .sep .arr, .navbar .near .arr { margin-left: 2px; }
.status { justify-self: end; padding-right: 32px; font-weight: bold; }

/* timeline */
.timeline {
  display: flex;
  align-items: flex-start;
  height: 49px;
  padding: 7px 12px 0;
  border-top: 2px solid #c9c9c9;
  background: #f1f1f1;
}
.play { display: flex; align-items: center; gap: 13px; width: 133px; height: 34px; }
.track { border-top: 6px solid #6b86dc; width: 116px; }
.steps { display: flex; margin-top: -1px; }
.steps button { flex: none; width: 24px; height: 23px; }
.steps button:first-child { margin-left: -2px; }
.steps .cur { background: #0696d7; }
.ruler { margin: 0 0 0 9px; }
.marker { margin: 2px 0 0 -5px; }
.prefs { margin: 9px 0 0 auto; }
```
FILE: script.js
```js
// Isometric work plane: one major cell is 125 mm and holds five 25 mm cells.
const NS = "http://www.w3.org/2000/svg";
const origin = { x: 778, y: 623 };
const min = -8.2, maxU = 7.8, maxV = 8;
const at = (u, v) => [origin.x + 78 * (u + v), origin.y + 45 * (u - v)];

function line(a, b, colour, parent) {
  const el = document.createElementNS(NS, "line");
  el.setAttribute("x1", a[0]); el.setAttribute("y1", a[1]);
  el.setAttribute("x2", b[0]); el.setAttribute("y2", b[1]);
  el.setAttribute("stroke", colour);
  parent.append(el);
}

const grid = document.getElementById("grid");
for (const major of [false, true]) {
  for (let i = -41; i <= 40; i++) {
    if ((i % 5 === 0) !== major) continue;
    const t = i / 5, colour = major ? "#c6c6c6" : "#ececec";
    if (t <= maxU) line(at(t, min), at(t, maxV), colour, grid);
    line(at(min, t), at(maxU, t), colour, grid);
  }
}
line(at(min, min), at(min, maxV), "#777", grid);
line(at(min, maxV), at(maxU, maxV), "#777", grid);
line(at(maxU, min), at(maxU, maxV), "#777", grid);
line(at(min, min), at(maxU, min), "#777", grid);
line(at(min, 0), at(maxU, 0), "#f59a9a", grid);
line(at(0, min), at(0, maxV), "#94ee94", grid);

const rulers = document.getElementById("rulers");
function label(text, point, angle, cls) {
  const el = document.createElementNS(NS, "text");
  el.textContent = text;
  el.setAttribute("class", cls);
  el.setAttribute("transform", `translate(${point[0]} ${point[1]}) rotate(${angle})`);
  rulers.append(el);
}
for (let k = -1; k <= 34; k++) {
  const p = at(maxU, k / 5);
  label(Math.abs(k * 25), [p[0] - 2, p[1] + 6], 34, "east");
}
for (let k = 1; k <= 10; k++) {
  const p = at(-k / 5, min);
  label(k * 25, [p[0] + 7, p[1] - 1], -34, "south");
}

const value = document.getElementById("val");
value.scrollLeft = value.scrollWidth;
```
